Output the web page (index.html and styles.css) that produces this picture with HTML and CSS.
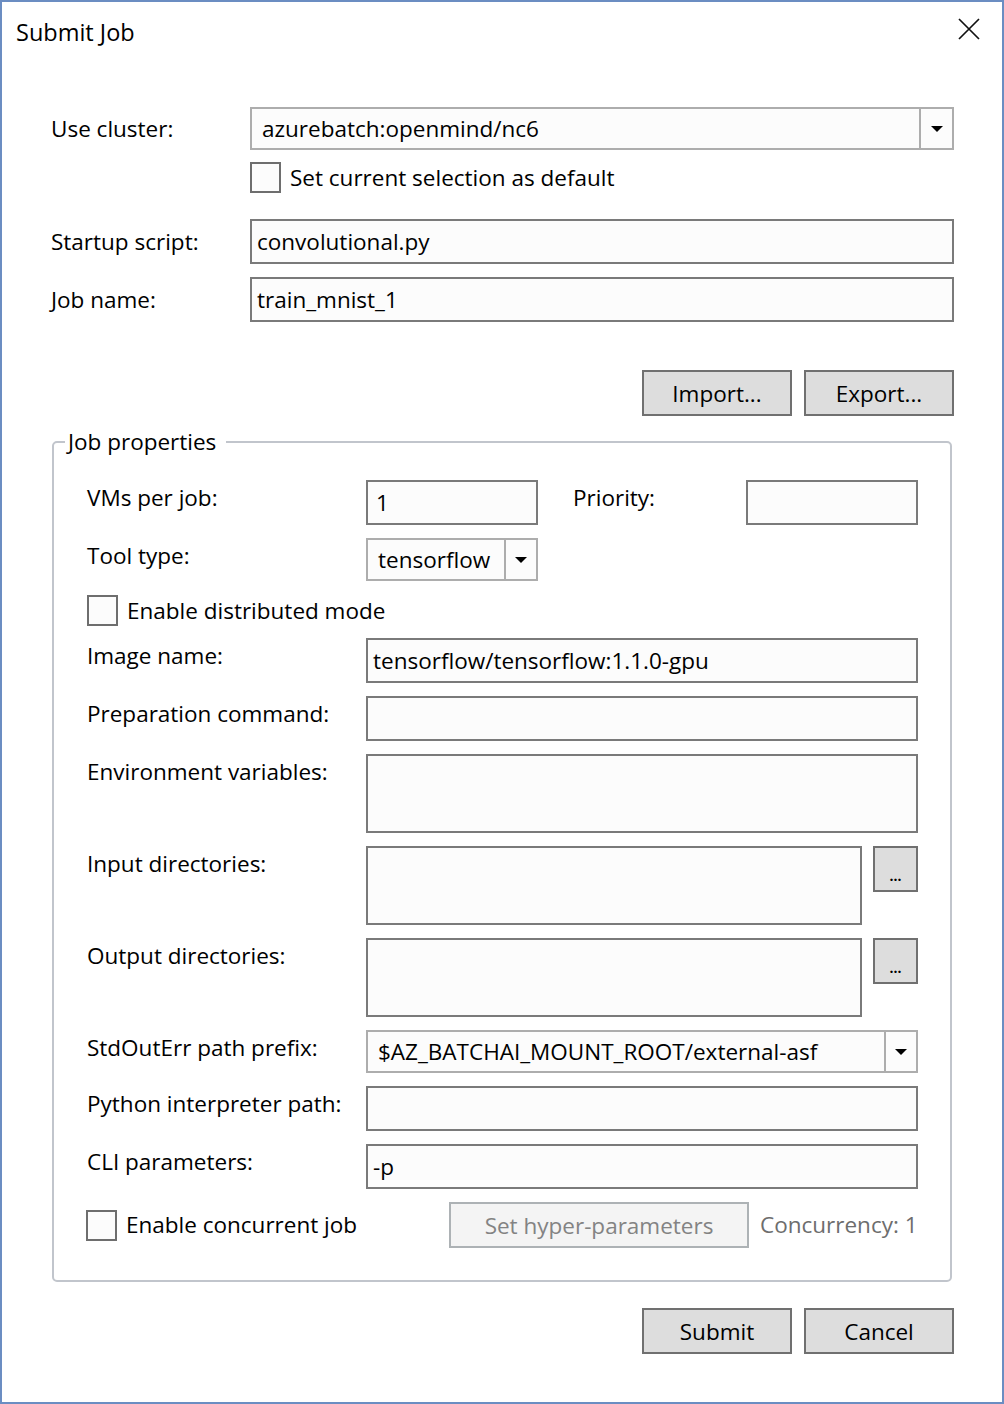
FILE: index.html
```html
<!DOCTYPE html>
<html>
<head>
<meta charset="utf-8">
<title>Submit Job</title>
<link rel="stylesheet" href="styles.css">
</head>
<body>
<div class="window">
  <div class="titlebar">
    <span class="title">Submit Job</span>
    <svg class="close" width="22" height="22" viewBox="0 0 22 22"><path d="M1 1 L21 21 M21 1 L1 21" stroke="#111" stroke-width="1.7" fill="none"/></svg>
  </div>
  <div class="content">
    <div class="form">
      <div class="frow r-cluster">
        <div class="lbl">Use cluster:</div>
        <div class="combo grow"><span class="val">azurebatch:openmind/nc6</span><span class="drop"><span class="arrow"></span></span></div>
      </div>
      <div class="frow r-default">
        <div class="lbl"></div>
        <div class="check"><span class="box"></span><span class="ctext">Set current selection as default</span></div>
      </div>
      <div class="frow r-startup">
        <div class="lbl">Startup script:</div>
        <div class="tb grow"><span class="val">convolutional.py</span></div>
      </div>
      <div class="frow r-jobname">
        <div class="lbl">Job name:</div>
        <div class="tb grow"><span class="val">train_mnist_1</span></div>
      </div>
    </div>
    <div class="btnrow r-io">
      <button class="btn">Import...</button>
      <button class="btn">Export...</button>
    </div>
    <fieldset class="group">
      <legend>Job properties</legend>
      <div class="gbody">
        <div class="grow-row r-first">
          <div class="glbl">VMs per job:</div>
          <div class="tb small"><span class="val v-one">1</span></div>
          <div class="glbl prio">Priority:</div>
          <div class="tb small"></div>
        </div>
        <div class="grow-row">
          <div class="glbl">Tool type:</div>
          <div class="combo small"><span class="val">tensorflow</span><span class="drop d30"><span class="arrow"></span></span></div>
        </div>
        <div class="grow-row r-dist">
          <div class="check"><span class="box"></span><span class="ctext">Enable distributed mode</span></div>
        </div>
        <div class="grow-row r-after-dist">
          <div class="glbl">Image name:</div>
          <div class="tb grow"><span class="val">tensorflow/tensorflow:1.1.0-gpu</span></div>
        </div>
        <div class="grow-row">
          <div class="glbl">Preparation command:</div>
          <div class="tb grow"></div>
        </div>
        <div class="grow-row">
          <div class="glbl">Environment variables:</div>
          <div class="tb grow tall"></div>
        </div>
        <div class="grow-row">
          <div class="glbl">Input directories:</div>
          <div class="tb grow tall"></div>
          <button class="btn dots">...</button>
        </div>
        <div class="grow-row">
          <div class="glbl">Output directories:</div>
          <div class="tb grow tall"></div>
          <button class="btn dots">...</button>
        </div>
        <div class="grow-row">
          <div class="glbl">StdOutErr path prefix:</div>
          <div class="combo grow"><span class="val">$AZ_BATCHAI_MOUNT_ROOT/external-asf</span><span class="drop d30"><span class="arrow"></span></span></div>
        </div>
        <div class="grow-row">
          <div class="glbl">Python interpreter path:</div>
          <div class="tb grow"></div>
        </div>
        <div class="grow-row">
          <div class="glbl">CLI parameters:</div>
          <div class="tb grow"><span class="val">-p</span></div>
        </div>
        <div class="grow-row r-last">
          <div class="check conc"><span class="box"></span><span class="ctext">Enable concurrent job</span></div>
          <button class="btn disabled">Set hyper-parameters</button>
          <span class="concur">Concurrency: 1</span>
        </div>
      </div>
    </fieldset>
    <div class="btnrow r-foot">
      <button class="btn">Submit</button>
      <button class="btn">Cancel</button>
    </div>
  </div>
</div>
</body>
</html>
```

FILE: styles.css
```css
* { box-sizing: border-box; }
html, body { margin: 0; padding: 0; background: #fff; }
body {
  font-family: "Open Sans", "Noto Sans", sans-serif;
  font-size: 22.5px;
  line-height: 30px;
  color: #000;
}
.window {
  width: 1004px;
  height: 1404px;
  border: 2px solid #6b8dc2;
  background: #fff;
  display: flex;
  flex-direction: column;
}
.titlebar {
  height: 62px;
  display: flex;
  justify-content: space-between;
  align-items: flex-start;
  padding: 15px 22px 0 14px;
}
.title { font-size: 23.5px; }
.close { margin-top: 1px; display: block; }
.content {
  padding: 43px 48px 0 49px;
  display: flex;
  flex-direction: column;
}
.frow { display: flex; align-items: center; }
.lbl { width: 199px; flex: none; }
.r-default { margin-top: 12px; }
.r-startup { margin-top: 26px; }
.r-jobname { margin-top: 13px; }
.grow { flex: 1; }
.tb {
  height: 45px;
  border: 2px solid #7a7a7a;
  background: #fcfcfc;
  display: flex;
  align-items: center;
  padding-left: 5px;
}
.tb.tall { height: 79px; align-items: flex-start; }
.tb.small { width: 172px; flex: none; }
.val { white-space: nowrap; }
.v-one { padding-left: 3px; }
.combo {
  height: 43px;
  border: 2px solid #adadad;
  background: #fcfcfc;
  display: flex;
  align-items: stretch;
}
.combo.small { width: 172px; flex: none; }
.combo .val { flex: 1; display: flex; align-items: center; padding-left: 10px; }
.drop {
  width: 33px;
  border-left: 2px solid #adadad;
  display: flex;
  align-items: center;
  justify-content: center;
  flex: none;
}
.drop.d30 { width: 32px; }
.arrow {
  width: 0; height: 0;
  border-left: 6px solid transparent;
  border-right: 6px solid transparent;
  border-top: 6px solid #000;
}
.check { display: flex; align-items: center; }
.box {
  width: 31px; height: 31px;
  border: 2px solid #6e6e6e;
  background: #fcfcfc;
  flex: none;
  margin-right: 9px;
}
.btnrow { display: flex; justify-content: flex-end; gap: 12px; }
.r-io { margin-top: 48px; }
.btn {
  width: 150px;
  height: 46px;
  border: 2px solid #707070;
  background: #dddddd;
  font-family: inherit;
  font-size: 22.5px;
  color: #000;
  padding: 0;
  margin: 0;
}
.group {
  margin: 11px 2px 0 1px;
  padding: 0;
  border: 2px solid #c1c5cc;
  border-radius: 5px;
  min-width: 0;
}
.group legend {
  margin-left: 11px;
  padding: 0 10px 0 3px;
  font-size: 22.5px;
}
.gbody { padding: 23px 32px 32px 33px; }
.grow-row { display: flex; align-items: flex-start; margin-top: 13px; }
.grow-row.r-first { margin-top: 0; }
.grow-row.r-dist { margin-top: 14px; }
.grow-row.r-after-dist { margin-top: 12px; }
.glbl { width: 279px; flex: none; padding-top: 3px; }
.glbl.prio { width: 173px; margin-left: 35px; }
.btn.dots {
  width: 45px;
  height: 46px;
  margin-left: 11px;
  font-size: 14px;
  line-height: 14px;
  padding-top: 14px;
  font-weight: bold;
  flex: none;
}
.r-last { align-items: center; }
.check.conc { width: 362px; flex: none; margin-left: -1px; }
.btn.disabled {
  width: 300px;
  background: #f4f4f4;
  border-color: #adb2b5;
  color: #838383;
  flex: none;
  margin-left: 1px;
}
.concur { margin-left: 11px; color: #6d6d6d; }
.r-foot { margin-top: 26px; }
```
